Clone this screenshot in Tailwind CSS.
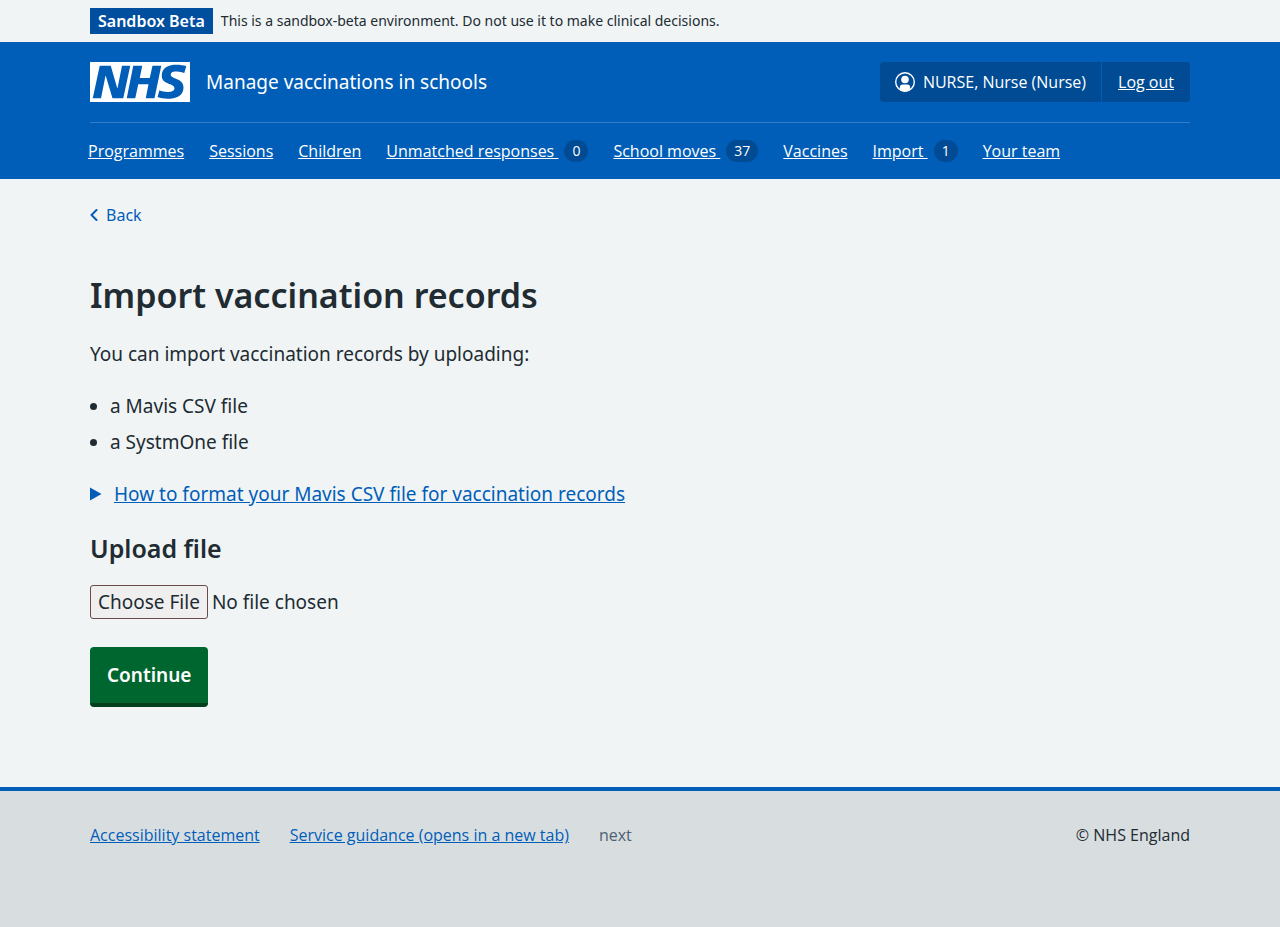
<!DOCTYPE html>
<html lang="en">
<head>
<meta charset="utf-8">
<meta name="viewport" content="width=device-width, initial-scale=1">
<title>Import vaccination records</title>
<script src="https://cdn.jsdelivr.net/npm/@tailwindcss/browser@4"></script>
</head>
<body class="flex min-h-screen flex-col bg-[#f0f4f5] font-['Noto_Sans',sans-serif] text-[19px] leading-7 font-[450] text-[#212b32]">
  <div class="py-2">
    <div class="mx-auto flex max-w-[1164px] items-center gap-2 px-8 leading-[26px]">
      <strong class="bg-[#004f9f] px-2 text-[16px] font-semibold text-white">Sandbox Beta</strong>
      <span class="text-[14px]">This is a sandbox-beta environment. Do not use it to make clinical decisions.</span>
    </div>
  </div>

  <header class="bg-[#005eb8] text-white">
    <div class="mx-auto max-w-[1164px] px-8">
      <div class="flex items-center justify-between border-b border-[#337ec6] py-5">
        <a href="#" class="flex items-center gap-4">
          <svg class="h-10 w-[100px]" viewBox="0 0 200 80" role="img" aria-label="NHS"><path fill="#fff" d="M200 0v80H0V0h200Zm-27.500 5.500c-14.500 0-29 5-29 22 0 10.200 7.700 13.500 14.700 16.300l.7.3c5.400 2 10.100 3.900 10.100 8.400 0 6.500-8.500 7.500-14 7.500s-12.500-1.500-16-3.500L135 70c5.500 2 13.500 3.500 20 3.500 15.500 0 32-4.500 32-22.500 0-19.500-25.500-16.500-25.500-25.500 0-5.500 5.500-6.500 12.500-6.500a35 35 0 0 1 14.500 3l4-13.500c-4.500-2-12-3-20-3Zm-131 2h-22l-14 65H22l9-45h.5l13.500 45h21.500l14-65H64l-9 45h-.5l-13-45Zm63 0h-18l-13 65h17l6-28H117l-5.500 28H129l13.500-65H125L119.500 32h-20l5-24.500Z"/></svg>
          <span>Manage vaccinations in schools</span>
        </a>
        <div class="flex h-10 items-center rounded bg-[#004b93] font-['Open_Sans',sans-serif] text-[16px]">
          <div class="flex h-full items-center gap-2 border-r border-[#005eb8] px-[15px]">
            <svg class="size-5" viewBox="0 0 20 20" aria-hidden="true"><circle cx="10" cy="10" r="9.300" fill="none" stroke="#fff" stroke-width="1.400"/><circle cx="10" cy="7.500" r="3.800" fill="#fff"/><path fill="#fff" d="M4.800 18v-2.500a2.900 2.900 0 0 1 2.900-2.900h4.600a2.900 2.900 0 0 1 2.900 2.900V18A9.500 9.500 0 0 1 4.800 18Z"/></svg>
            <span>NURSE, Nurse (Nurse)</span>
          </div>
          <a href="#" class="px-4 underline">Log out</a>
        </div>
      </div>
      <nav class="-mx-[2px] flex gap-[25px] py-4 font-['Open_Sans',sans-serif] text-[16px] leading-6" aria-label="Main">
        <a href="#" class="underline">Programmes</a>
        <a href="#" class="underline">Sessions</a>
        <a href="#" class="underline">Children</a>
        <a href="#" class="flex items-center gap-[6px]"><span class="whitespace-pre underline">Unmatched responses </span><span class="rounded-full bg-[#004b93] px-2 text-[14px] leading-[22px]">0</span></a>
        <a href="#" class="flex items-center gap-[6px]"><span class="whitespace-pre underline">School moves </span><span class="rounded-full bg-[#004b93] px-2 text-[14px] leading-[22px]">37</span></a>
        <a href="#" class="underline">Vaccines</a>
        <a href="#" class="flex items-center gap-[6px]"><span class="whitespace-pre underline">Import </span><span class="rounded-full bg-[#004b93] px-2 text-[14px] leading-[22px]">1</span></a>
        <a href="#" class="underline">Your team</a>
      </nav>
    </div>
  </header>

  <main class="mx-auto w-full max-w-[1164px] grow px-8 pt-6 pb-20">
    <a href="#" class="inline-flex items-center gap-2 align-top text-[16px] leading-6 text-[#005eb8]">
      <svg class="h-3 w-2" viewBox="0 0 8 12" fill="none" stroke="currentColor" stroke-width="2" stroke-linecap="round" stroke-linejoin="round" aria-hidden="true"><path d="M6.500 1 1.500 6l5 5"/></svg>
      Back
    </a>
    <h1 class="mt-[43px] text-[34px] leading-[42px] font-semibold">Import vaccination records</h1>
    <p class="mt-6">You can import vaccination records by uploading:</p>
    <ul class="mt-6 list-disc space-y-2 pl-5">
      <li>a Mavis CSV file</li>
      <li>a SystmOne file</li>
    </ul>
    <details class="mt-6 text-[#005eb8]">
      <summary class="flex w-fit cursor-pointer list-none items-center gap-3">
        <svg class="h-[14px] w-3" viewBox="0 0 12 14" fill="currentColor" aria-hidden="true"><path d="M0 .5l11.500 6.500L0 13.500Z"/></svg>
        <span class="underline">How to format your Mavis CSV file for vaccination records</span>
      </summary>
    </details>
    <form class="mt-6">
      <label for="records" class="block text-[25px] leading-8 font-semibold">Upload file</label>
      <input id="records" type="file" class="mt-[21px] block leading-7 file:mr-1 file:h-[34px] file:rounded-[3px] file:border file:border-solid file:border-[#6b4a4a] file:bg-[#efefef] file:px-[7px] file:font-[450] file:text-[#212b32]">
      <button type="button" class="mt-7 h-[60px] rounded border-b-4 border-[#00401e] bg-[#00662f] px-[17px] font-semibold text-white">Continue</button>
    </form>
  </main>

  <footer class="border-t-4 border-[#005eb8] bg-[#d8dde0] font-['Open_Sans',sans-serif] text-[16px] leading-6">
    <div class="mx-auto flex max-w-[1164px] items-start gap-[30px] px-8 pt-8 pb-20">
      <a href="#" class="text-[#005eb8] underline">Accessibility statement</a>
      <a href="#" class="text-[#005eb8] underline">Service guidance (opens in a new tab)</a>
      <span class="text-[#4c6272]">next</span>
      <p class="ml-auto">© NHS England</p>
    </div>
  </footer>
</body>
</html>
